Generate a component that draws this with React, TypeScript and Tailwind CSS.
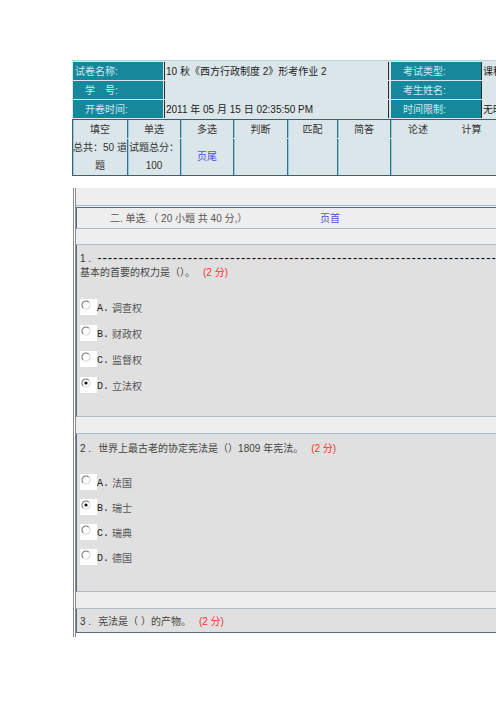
import type { ReactNode } from "react";

// exam paper header + first questions of 单选 section

const LINE = "border-[#a9bccd]";
const DARK = "border-[#5b6b7b]";

function InfoRow({ label, labelPad, value, label2, value2 }: {
  label: string;
  labelPad: string;
  value: string;
  label2: string;
  value2: string;
}) {
  return (
    <div className="flex h-[18px]">
      <div className={`ml-[1px] flex w-[90px] shrink-0 items-center bg-[#16889c] text-[#cfe9ef] ${labelPad}`}>
        {label}
      </div>
      <div className="ml-[1px] flex w-[224px] shrink-0 items-center whitespace-nowrap border-l border-[#2b2b2b] pl-[1px] text-[#222]">
        {value}
      </div>
      <div className="flex shrink-0 border-l border-[#2b2b2b] pl-[2px]">
        <div className="flex w-[90px] items-center bg-[#16889c] pl-[12px] text-[#cfe9ef]">{label2}</div>
      </div>
      <div className="flex flex-1 items-center whitespace-nowrap border-l border-[#2b2b2b] pl-[1px] text-[#222]">
        {value2}
      </div>
    </div>
  );
}

const TYPES = ["填空", "单选", "多选", "判断", "匹配", "简答", "论述", "计算"];
const WIDTHS = ["w-[54px]", "w-[53px]", "w-[53px]", "w-[54px]", "w-[50px]", "w-[53px]", "w-[55px]", "w-[53px]"];
const DIV = "border-l border-[#2f7188] shadow-[inset_1px_0_0_#93cbd9]";

function TypeTable() {
  const second: ReactNode[] = [
    <>总共：50 道<br />题</>,
    <>试题总分：<br />100</>,
    <span className="text-[#4f4fe0]">页尾</span>,
    null, null, null, null, null,
  ];
  return (
    <div className={`flex flex-col gap-[1px] border-y border-[#3f5f6f] bg-[#dbe6ea] ${DIV}`}>
      <div className="flex h-[18px]">
        {TYPES.map((t, i) => (
          <div key={t} className={`flex shrink-0 items-center justify-center text-[#333] ${WIDTHS[i]} ${i > 0 && i < 7 ? DIV : ""}`}>
            {t}
          </div>
        ))}
      </div>
      <div className="flex h-[36px]">
        {second.map((c, i) => (
          <div key={i} className={`flex shrink-0 items-center justify-center text-center leading-[18px] text-[#333] ${WIDTHS[i]} ${i > 0 && i < 7 ? DIV : ""}`}>
            {c}
          </div>
        ))}
      </div>
    </div>
  );
}

function Radio({ checked }: { checked?: boolean }) {
  return (
    <span className="block h-[16px] w-[17px] shrink-0 bg-white">
      <svg width="17" height="16" viewBox="0 0 17 16">
        <circle cx="6" cy="6" r="4" fill="#fff" />
        <path d="M3.17 8.83 A4 4 0 0 1 8.83 3.17" fill="none" stroke="#7a7a7a" strokeWidth="1.2" />
        <path d="M8.83 3.17 A4 4 0 0 1 3.17 8.83" fill="none" stroke="#d6d6d6" strokeWidth="1.2" />
        {checked && <circle cx="6" cy="6" r="1.6" fill="#111" />}
      </svg>
    </span>
  );
}

function Options({ items, checked, gap }: { items: string[]; checked: number; gap: string }) {
  return (
    <div className={`flex flex-col ${gap}`}>
      {items.map((t, i) => (
        <div key={t} className="flex h-[16px] items-end">
          <Radio checked={i === checked} />
          <span className="w-[15px] font-['Liberation_Mono',monospace] leading-[13px] text-[#222]">
            {"ABCD"[i]}.
          </span>
          <span className="leading-[13px] text-[#555]">{t}</span>
        </div>
      ))}
    </div>
  );
}

function Score() {
  return <span className="ml-[8px] text-[#ff3030]">(2 分)</span>;
}

export default function App() {
  return (
    <div className="h-[702px] w-[496px] overflow-hidden bg-white font-['Liberation_Sans','Noto_Sans_CJK_SC',sans-serif] text-[10px]">
      <div className="w-[660px] pl-[72px] pt-[60px]">
        <div className="flex flex-col gap-[1px] border-t border-[#b7d4dd] bg-[#dbe6ea] pb-[1px] pt-[1px]">
          <InfoRow label="试卷名称:" labelPad="pl-[2px]" value="10 秋《西方行政制度 2》形考作业 2" label2="考试类型:" value2="课程作业" />
          <InfoRow label="学　号:" labelPad="pl-[12px]" value="" label2="考生姓名:" value2="" />
          <InfoRow label="开卷时间:" labelPad="pl-[12px]" value="2011 年 05 月 15 日 02:35:50 PM" label2="时间限制:" value2="无时限" />
        </div>
        <TypeTable />

        <div className="ml-[1px] mt-[12px] border-l-[3px] border-double border-[#8a8a8a] pb-[4px]">
          <div className={`h-[18px] border-b bg-[#eeeeee] ${LINE}`} />
          <div className="h-[1px] bg-[#eeeeee]" />
          <div className={`flex h-[22px] items-center border-b border-l border-t bg-[#eeeeee] pl-[33px] text-[#555] ${DARK} border-b-[#a9bccd]`}>
            <span className="w-[210px] shrink-0">二. 单选.（ 20 小题 共 40 分,）</span>
            <span className="text-[#4f4fe0]">页首</span>
          </div>
          <div className={`h-[16px] border-b bg-[#eeeeee] ${LINE}`} />

          <div className={`h-[172px] border-b border-l bg-[#e0e0e0] pl-[3px] pt-[6px] ${LINE} border-l-[#5b6b7b]`}>
            <div className="flex h-[14px] items-center overflow-hidden whitespace-nowrap text-[#333]">
              <span>1 .</span>
              <span className="ml-[6px] font-['Liberation_Sans',sans-serif] text-[13px] leading-[14px] tracking-[1px] text-black">
                {"-".repeat(90)}
              </span>
            </div>
            <div className="flex h-[14px] items-center whitespace-nowrap text-[#444]">
              基本的首要的权力是（）。<Score />
            </div>
            <div className="mt-[20px]">
              <Options items={["调查权", "财政权", "监督权", "立法权"]} checked={3} gap="gap-[10px]" />
            </div>
          </div>

          <div className={`h-[17px] border-b bg-[#eeeeee] ${LINE}`} />

          <div className={`h-[158px] border-b border-l bg-[#e0e0e0] pl-[3px] pt-[7px] ${LINE} border-l-[#5b6b7b]`}>
            <div className="flex h-[14px] items-center whitespace-nowrap text-[#444]">
              <span className="mr-[7px] text-[#333]">2 .</span>世界上最古老的协定宪法是（）1809 年宪法。<Score />
            </div>
            <div className="mt-[19px]">
              <Options items={["法国", "瑞士", "瑞典", "德国"]} checked={1} gap="gap-[9px]" />
            </div>
          </div>

          <div className={`h-[17px] border-b bg-[#eeeeee] ${LINE}`} />

          <div className={`h-[24px] border-b border-l bg-[#e0e0e0] pl-[3px] pt-[5px] ${DARK}`}>
            <div className="flex h-[14px] items-center whitespace-nowrap text-[#444]">
              <span className="mr-[7px] text-[#333]">3 .</span>宪法是（ ）的产物。<Score />
            </div>
          </div>
        </div>
      </div>
    </div>
  );
}
